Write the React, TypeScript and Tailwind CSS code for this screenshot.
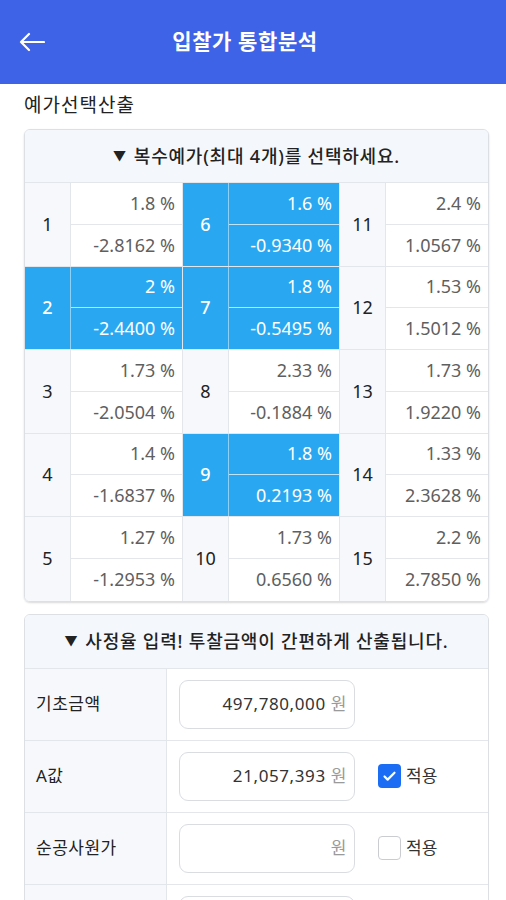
import { Check } from 'lucide-react';

type Cell = { no: number; rate: string; diff: string; on?: boolean };

const rows: Cell[][] = [
  [
    { no: 1, rate: '1.8', diff: '-2.8162' },
    { no: 6, rate: '1.6', diff: '-0.9340', on: true },
    { no: 11, rate: '2.4', diff: '1.0567' },
  ],
  [
    { no: 2, rate: '2', diff: '-2.4400', on: true },
    { no: 7, rate: '1.8', diff: '-0.5495', on: true },
    { no: 12, rate: '1.53', diff: '1.5012' },
  ],
  [
    { no: 3, rate: '1.73', diff: '-2.0504' },
    { no: 8, rate: '2.33', diff: '-0.1884' },
    { no: 13, rate: '1.73', diff: '1.9220' },
  ],
  [
    { no: 4, rate: '1.4', diff: '-1.6837' },
    { no: 9, rate: '1.8', diff: '0.2193', on: true },
    { no: 14, rate: '1.33', diff: '2.3628' },
  ],
  [
    { no: 5, rate: '1.27', diff: '-1.2953' },
    { no: 10, rate: '1.73', diff: '0.6560' },
    { no: 15, rate: '2.2', diff: '2.7850' },
  ],
];

const valW = ['w-[112px]', 'w-[111px]', 'flex-1'];

function PriceCell({ c, i }: { c: Cell; i: number }) {
  const last = i === 2;
  return (
    <>
      <div
        className={`w-[46px] flex items-center justify-center border-r text-[18px] ${
          c.on ? 'bg-[#29a8f1] text-white border-[#8fd0f6] font-medium' : 'bg-[#f6f8fb] text-[#222] border-[#e3e6ea]'
        }`}
      >
        {c.no}
      </div>
      <div className={`${valW[i]} flex flex-col ${last ? '' : 'border-r border-[#e3e6ea]'}`}>
        <div
          className={`flex-1 flex items-center justify-end pr-[7px] border-b text-[18px] ${
            c.on ? 'bg-[#29a8f1] text-white border-[#bfe4fa]' : 'bg-white text-[#5f5f5f] border-[#e3e6ea]'
          }`}
        >
          {c.rate} %
        </div>
        <div
          className={`flex-1 flex items-center justify-end pr-[7px] text-[18px] ${
            c.on ? 'bg-[#29a8f1] text-white' : 'bg-white text-[#5f5f5f]'
          }`}
        >
          {c.diff} %
        </div>
      </div>
    </>
  );
}

function InputRow({ label, value, check, blank }: { label: string; value: string; check?: 'on' | 'off'; blank?: boolean }) {
  return (
    <div className="flex h-[72px] border-b border-[#e3e6ea]">
      <div className="w-[142px] bg-[#f6f8fb] border-r border-[#e3e6ea] flex items-center pl-[11px] text-[17px] text-[#222] tracking-[0.5px]">
        {label}
      </div>
      <div className="flex-1 flex items-center pl-[12px]">
        <div className="w-[176px] h-[49px] rounded-[9px] border border-[#d9dce1] bg-white flex items-center justify-end pr-[7px] text-[17px] text-[#333] tracking-[0.6px]">
          {value && <span className="mr-[5px]">{value}</span>}
          {!blank && <span className="text-[#9a9a9a]">원</span>}
        </div>
        {check && (
          <div className="flex items-center ml-[23px]">
            {check === 'on' ? (
              <div className="w-[23px] h-[24px] rounded-[4px] bg-[#1b6ef3] flex items-center justify-center">
                <Check size={15} strokeWidth={3.5} color="white" />
              </div>
            ) : (
              <div className="w-[23px] h-[24px] rounded-[4px] border border-[#c9cdd2] bg-white" />
            )}
            <span className="ml-[5px] text-[17px] text-[#333]">적용</span>
          </div>
        )}
      </div>
    </div>
  );
}

export default function App() {
  return (
    <div
      className="w-[506px] h-[900px] overflow-hidden bg-white"
      style={{ fontFamily: '"Noto Sans", "Noto Sans CJK KR", sans-serif' }}
    >
      <header className="h-[84px] bg-[#3f63e6] flex items-center relative">
        <svg className="absolute left-[19px] top-[32px]" width="26" height="20" viewBox="0 0 26 20" fill="none">
          <path d="M25 10H2M10 2L2 10l8 8" stroke="white" strokeWidth="2.2" strokeLinecap="round" strokeLinejoin="round" />
        </svg>
        <h1 className="w-full pr-[16px] text-center text-white text-[21px] font-bold tracking-[0.6px]">입찰가 통합분석</h1>
      </header>

      <div className="pl-[24px] pr-[17px] pt-[8px]">
        <h2 className="text-[19px] text-[#222] leading-[26px] mb-[11px] tracking-[1px]">예가선택산출</h2>

        <div className="border border-[#dcdfe4] rounded-[6px] overflow-hidden shadow-[0_1px_2px_rgba(0,0,0,0.15)]">
          <div className="h-[53px] bg-[#f4f7fb] border-b border-[#e3e6ea] flex items-center justify-center text-[18px] font-medium text-[#222] tracking-[0.8px]">
            <span className="text-[13px] mr-[7px]">▼</span>복수예가(최대 4개)를 선택하세요.
          </div>
          {rows.map((r, ri) => (
            <div key={ri} className={`flex h-[83.5px] ${ri < 4 ? 'border-b border-[#e3e6ea]' : ''}`}>
              {r.map((c, i) => (
                <PriceCell key={c.no} c={c} i={i} />
              ))}
            </div>
          ))}
        </div>

        <div className="mt-[12px] border border-[#dcdfe4] rounded-[6px] overflow-hidden">
          <div className="h-[54px] bg-[#f4f7fb] border-b border-[#e3e6ea] flex items-center justify-center text-[18px] font-medium text-[#222] tracking-[0.8px]">
            <span className="text-[13px] mr-[7px]">▼</span>사정율 입력! 투찰금액이 간편하게 산출됩니다.
          </div>
          <InputRow label="기초금액" value="497,780,000" />
          <InputRow label="A값" value="21,057,393" check="on" />
          <InputRow label="순공사원가" value="" check="off" />
          <InputRow label="" value="" blank />
        </div>
      </div>
    </div>
  );
}
